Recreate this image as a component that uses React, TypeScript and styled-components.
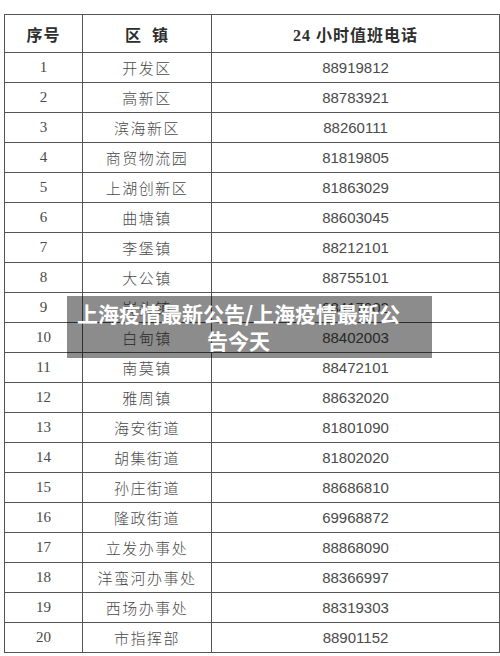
import React from 'react';
import styled, { createGlobalStyle } from 'styled-components';

const GlobalStyle = createGlobalStyle`
  html, body {
    margin: 0;
    padding: 0;
    background: #ffffff;
  }
`;

const Page = styled.div`
  position: relative;
  width: 500px;
  height: 656px;
  padding: 14px 4px 0 4px;
  box-sizing: border-box;
  overflow: hidden;
  background: #ffffff;
`;

const Table = styled.table`
  width: 492px;
  border-collapse: collapse;
  table-layout: fixed;
  border: 1px solid #6a6a6a;
`;

const HeadCell = styled.th<{ $w: number }>`
  width: ${(p) => p.$w}px;
  height: 37px;
  padding: 0;
  border: 1px solid #555;
  font-family: 'Liberation Serif', 'Noto Sans CJK SC', serif;
  font-size: 16px;
  font-weight: 700;
  color: #2e2e2e;
  letter-spacing: 1px;
  text-align: center;
  vertical-align: middle;
`;

const Cell = styled.td<{ $kind: 'num' | 'name' | 'phone' }>`
  height: 29px;
  padding: 0;
  border: 1px solid #555;
  text-align: center;
  vertical-align: middle;
  color: #4a4a4a;
  font-size: 15px;
  font-family: ${(p) =>
    p.$kind === 'num'
      ? "'Liberation Serif', serif"
      : p.$kind === 'phone'
        ? "'Liberation Sans', sans-serif"
        : "'Noto Sans CJK SC', sans-serif"};
  font-weight: ${(p) => (p.$kind === 'name' ? 300 : 400)};
  letter-spacing: ${(p) => (p.$kind === 'name' ? '1.5px' : '0')};
`;

const Caption = styled.div`
  position: absolute;
  left: 67px;
  top: 296px;
  width: 365px;
  box-sizing: border-box;
  padding: 4px 26px 4px 4px;
  background: rgba(0, 0, 0, 0.45);
  color: #ffffff;
  font-family: 'Noto Sans CJK SC', sans-serif;
  font-size: 21px;
  font-weight: 700;
  line-height: 27px;
  text-align: center;
`;

const rows: [string, string][] = [
  ['开发区', '88919812'],
  ['高新区', '88783921'],
  ['滨海新区', '88260111'],
  ['商贸物流园', '81819805'],
  ['上湖创新区', '81863029'],
  ['曲塘镇', '88603045'],
  ['李堡镇', '88212101'],
  ['大公镇', '88755101'],
  ['岗头镇', '88417002'],
  ['白甸镇', '88402003'],
  ['南莫镇', '88472101'],
  ['雅周镇', '88632020'],
  ['海安街道', '81801090'],
  ['胡集街道', '81802020'],
  ['孙庄街道', '88686810'],
  ['隆政街道', '69968872'],
  ['立发办事处', '88868090'],
  ['洋蛮河办事处', '88366997'],
  ['西场办事处', '88319303'],
  ['市指挥部', '88901152'],
];

export default function App() {
  return (
    <Page>
      <GlobalStyle />
      <Table>
        <thead>
          <tr>
            <HeadCell $w={77}>序号</HeadCell>
            <HeadCell $w={128}>区&nbsp;&nbsp;镇</HeadCell>
            <HeadCell $w={287}>24 小时值班电话</HeadCell>
          </tr>
        </thead>
        <tbody>
          {rows.map(([name, phone], i) => (
            <tr key={name}>
              <Cell $kind="num">{i + 1}</Cell>
              <Cell $kind="name">{name}</Cell>
              <Cell $kind="phone">{phone}</Cell>
            </tr>
          ))}
        </tbody>
      </Table>
      <Caption>上海疫情最新公告/上海疫情最新公告今天</Caption>
    </Page>
  );
}
